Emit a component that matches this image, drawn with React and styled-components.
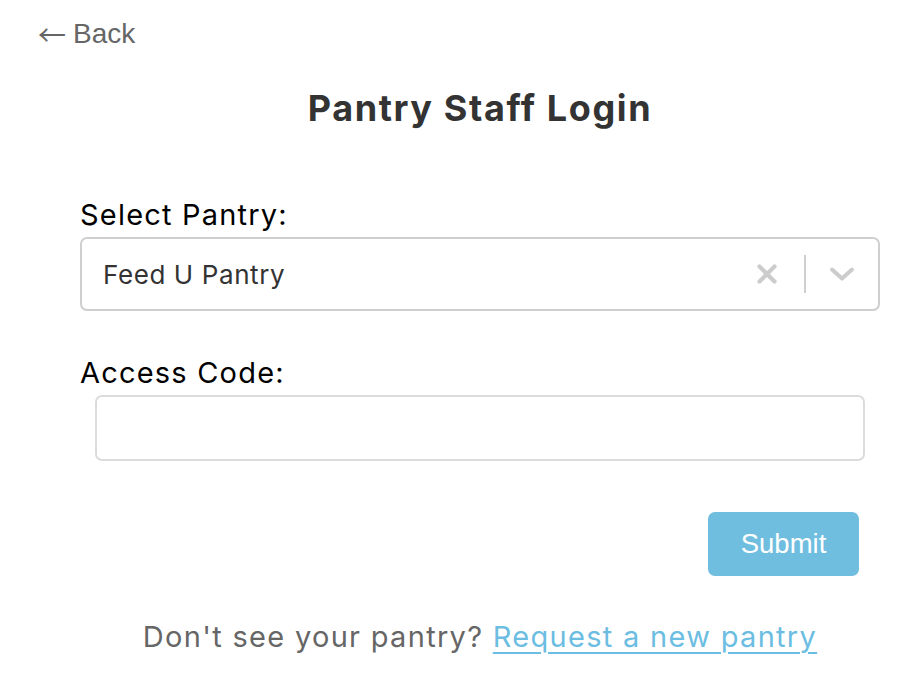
import React from "react";
import styled, { createGlobalStyle } from "styled-components";

const Global = createGlobalStyle`
  html, body { margin: 0; padding: 0; background: #fff; }
  body { font-family: "Inter", "Noto Sans", sans-serif; }
  * { box-sizing: border-box; }
`;

const Page = styled.div`
  width: 918px;
  height: 694px;
  padding: 18px 0 0 38px;
  display: flex;
  flex-direction: column;
`;

const BackLink = styled.a`
  font-family: "Liberation Sans", Arial, sans-serif;
  font-size: 28px;
  color: #666;
  text-decoration: none;
  line-height: 32px;
  align-self: flex-start;
  display: flex;
  align-items: center;
  gap: 7px;
`;

const Arrow = styled.span`
  font-family: "Noto Sans CJK JP", sans-serif;
  font-size: 28px;
  line-height: 32px;
  color: #666;
`;

const Form = styled.div`
  width: 800px;
  margin-left: 42px;
  display: flex;
  flex-direction: column;
`;

const Title = styled.h1`
  margin: 38px 0 0;
  text-align: center;
  font-family: "Inter", sans-serif;
  font-weight: 700;
  font-size: 36px;
  line-height: 40px;
  letter-spacing: 1.6px;
  color: #333;
`;

const Label = styled.label`
  margin-top: ${(p) => p.$top}px;
  font-size: 29px;
  line-height: 36px;
  color: #000;
  letter-spacing: 1.2px;
`;

const SelectBox = styled.div`
  margin-top: 4px;
  height: 74px;
  border: 2px solid #cfcfcf;
  border-radius: 7px;
  display: flex;
  align-items: center;
  padding-left: 21px;
`;

const SelectValue = styled.span`
  flex: 1;
  font-size: 26px;
  color: #333;
  letter-spacing: 0.6px;
`;

const Indicators = styled.div`
  display: flex;
  align-items: center;
  height: 100%;
`;

const IconWrap = styled.div`
  width: ${(p) => p.$w}px;
  display: flex;
  justify-content: center;
  align-items: center;
`;

const Separator = styled.span`
  width: 2px;
  height: 38px;
  background: #cfcfcf;
`;

const InputRow = styled.div`
  padding: 0 15px;
  margin-top: 4px;
`;

const Input = styled.input`
  width: 100%;
  height: 66px;
  border: 2px solid #dcdcdc;
  border-radius: 7px;
  font-size: 25px;
  outline: none;
`;

const ButtonRow = styled.div`
  display: flex;
  justify-content: flex-end;
  padding-right: 21px;
  margin-top: 51px;
`;

const Button = styled.button`
  width: 151px;
  height: 64px;
  border: none;
  border-radius: 7px;
  background: #70bedf;
  color: #fff;
  font-family: "Liberation Sans", Arial, sans-serif;
  font-size: 27.5px;
`;

const Footer = styled.p`
  margin: 43px 0 0;
  text-align: center;
  font-size: 29px;
  line-height: 36px;
  color: #666;
  letter-spacing: 1.3px;
`;

const Link = styled.a`
  color: #6cbde2;
  text-decoration: underline;
  text-underline-offset: 5px;
  text-decoration-thickness: 2px;
`;

export default function App() {
  return (
    <>
      <Global />
      <Page>
        <BackLink href="#">
          <Arrow>←</Arrow>
          Back
        </BackLink>
        <Form>
          <Title>Pantry Staff Login</Title>
          <Label $top={69}>Select Pantry:</Label>
          <SelectBox>
            <SelectValue>Feed U Pantry</SelectValue>
            <Indicators>
              <IconWrap $w={74}>
                <svg width="22" height="22" viewBox="0 0 22 22">
                  <path
                    d="M3.5 3.5 L18.5 18.5 M18.5 3.5 L3.5 18.5"
                    stroke="#cccccc"
                    strokeWidth="4.2"
                    strokeLinecap="round"
                    fill="none"
                  />
                </svg>
              </IconWrap>
              <Separator />
              <IconWrap $w={72}>
                <svg width="26" height="16" viewBox="0 0 26 16">
                  <path
                    d="M3 3.5 L13 12.5 L23 3.5"
                    stroke="#cccccc"
                    strokeWidth="4"
                    strokeLinecap="round"
                    strokeLinejoin="round"
                    fill="none"
                  />
                </svg>
              </IconWrap>
            </Indicators>
          </SelectBox>
          <Label $top={44}>Access Code:</Label>
          <InputRow>
            <Input type="password" />
          </InputRow>
          <ButtonRow>
            <Button>Submit</Button>
          </ButtonRow>
          <Footer>
            Don't see your pantry? <Link href="#">Request a new pantry</Link>
          </Footer>
        </Form>
      </Page>
    </>
  );
}
